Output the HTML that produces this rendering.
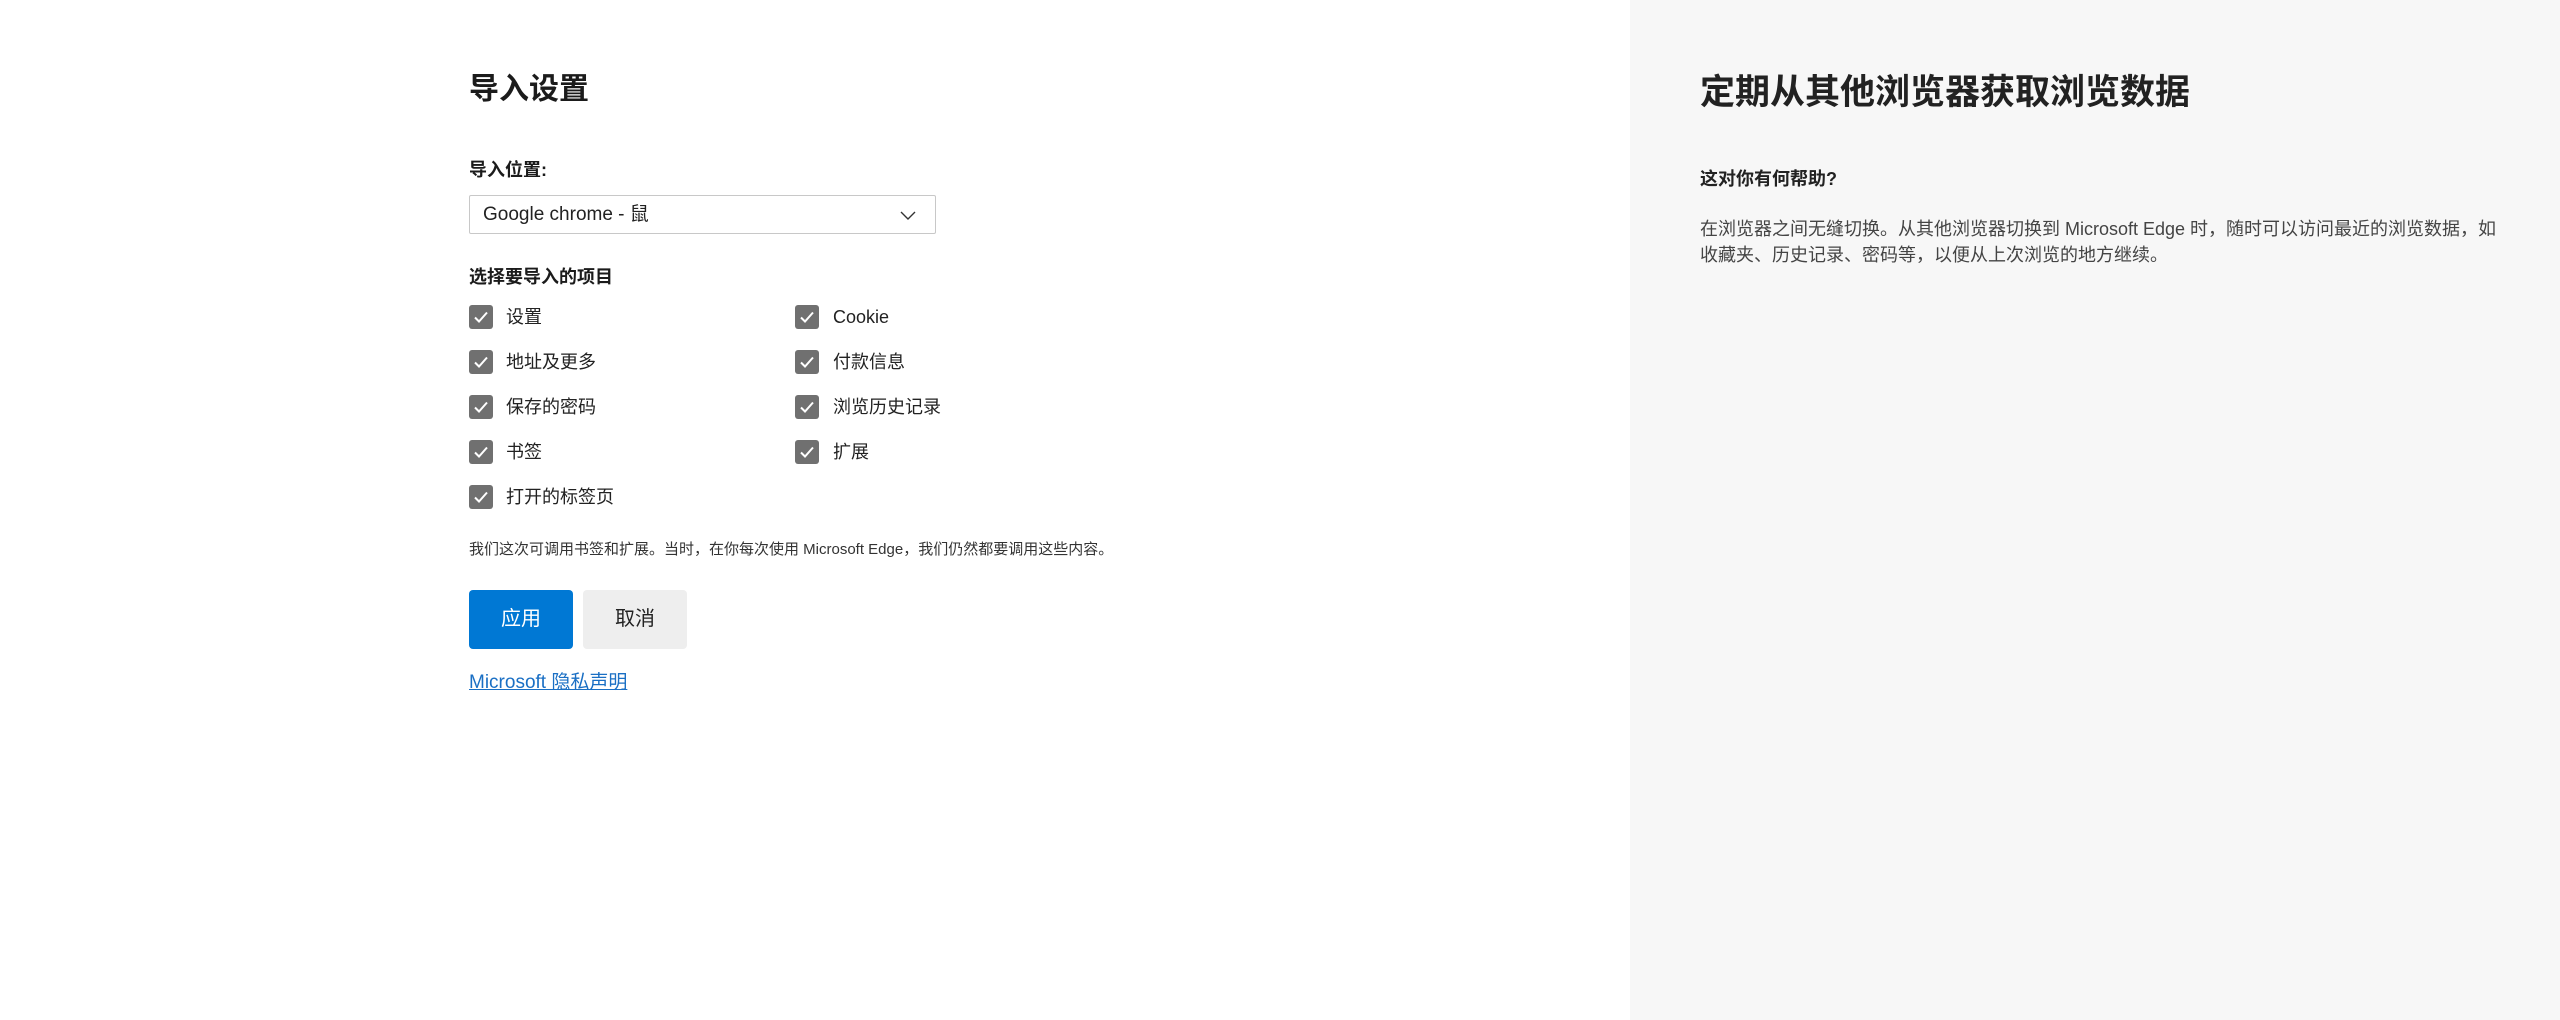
<!DOCTYPE html>
<html><head><meta charset="utf-8"><style>
html,body{margin:0;padding:0;width:2560px;height:1020px;overflow:hidden;background:#fff}
#bg{position:absolute;left:1630px;top:0;width:930px;height:1020px;background:#f7f7f7}
#c{position:absolute;left:0;top:0;width:2560px;height:1020px;font-family:"Liberation Sans","Noto Sans CJK SC",sans-serif;color:#1b1b1b}
.a{position:absolute;white-space:nowrap;line-height:1}
.cb{position:absolute;width:24px;height:24px;background:#707070;border-radius:3px}
.cb svg{position:absolute;left:4px;top:4px}
.t{position:absolute;font-size:18px;line-height:1;white-space:nowrap;color:#222}
</style></head><body>
<div id="bg"></div>
<div id="c">
<div class="a" style="left:469px;top:75px;font-size:30px;font-weight:bold">导入设置</div>
<div class="a" style="left:469px;top:161px;font-size:18px;font-weight:bold">导入位置:</div>
<div style="position:absolute;left:469px;top:195px;width:465px;height:37px;border:1px solid #c8c8c8;border-radius:2px;background:#fff">
<div class="a" style="left:13px;top:9px;font-size:19px;color:#222">Google chrome - 鼠</div>
<svg style="position:absolute;left:430px;top:13px" width="16" height="12" viewBox="0 0 16 12"><path d="M1 3 L8 10 L15 3" fill="none" stroke="#333" stroke-width="1.4"/></svg>
</div>
<div class="a" style="left:469px;top:268px;font-size:18px;font-weight:bold">选择要导入的项目</div>

<div class="cb" style="left:469px;top:305px"><svg width="16" height="16" viewBox="0 0 16 16"><path d="M2 8.5 L6 12.5 L14 3.5" fill="none" stroke="#fff" stroke-width="2"/></svg></div><div class="t" style="left:506px;top:308px">设置</div>
<div class="cb" style="left:469px;top:350px"><svg width="16" height="16" viewBox="0 0 16 16"><path d="M2 8.5 L6 12.5 L14 3.5" fill="none" stroke="#fff" stroke-width="2"/></svg></div><div class="t" style="left:506px;top:353px">地址及更多</div>
<div class="cb" style="left:469px;top:395px"><svg width="16" height="16" viewBox="0 0 16 16"><path d="M2 8.5 L6 12.5 L14 3.5" fill="none" stroke="#fff" stroke-width="2"/></svg></div><div class="t" style="left:506px;top:398px">保存的密码</div>
<div class="cb" style="left:469px;top:440px"><svg width="16" height="16" viewBox="0 0 16 16"><path d="M2 8.5 L6 12.5 L14 3.5" fill="none" stroke="#fff" stroke-width="2"/></svg></div><div class="t" style="left:506px;top:443px">书签</div>
<div class="cb" style="left:469px;top:485px"><svg width="16" height="16" viewBox="0 0 16 16"><path d="M2 8.5 L6 12.5 L14 3.5" fill="none" stroke="#fff" stroke-width="2"/></svg></div><div class="t" style="left:506px;top:488px">打开的标签页</div>

<div class="cb" style="left:795px;top:305px"><svg width="16" height="16" viewBox="0 0 16 16"><path d="M2 8.5 L6 12.5 L14 3.5" fill="none" stroke="#fff" stroke-width="2"/></svg></div><div class="t" style="left:833px;top:308px">Cookie</div>
<div class="cb" style="left:795px;top:350px"><svg width="16" height="16" viewBox="0 0 16 16"><path d="M2 8.5 L6 12.5 L14 3.5" fill="none" stroke="#fff" stroke-width="2"/></svg></div><div class="t" style="left:833px;top:353px">付款信息</div>
<div class="cb" style="left:795px;top:395px"><svg width="16" height="16" viewBox="0 0 16 16"><path d="M2 8.5 L6 12.5 L14 3.5" fill="none" stroke="#fff" stroke-width="2"/></svg></div><div class="t" style="left:833px;top:398px">浏览历史记录</div>
<div class="cb" style="left:795px;top:440px"><svg width="16" height="16" viewBox="0 0 16 16"><path d="M2 8.5 L6 12.5 L14 3.5" fill="none" stroke="#fff" stroke-width="2"/></svg></div><div class="t" style="left:833px;top:443px">扩展</div>

<div class="a" style="left:469px;top:542px;font-size:15px;color:#333">我们这次可调用书签和扩展。当时，在你每次使用 Microsoft Edge，我们仍然都要调用这些内容。</div>

<div style="position:absolute;left:469px;top:590px;width:104px;height:59px;background:#0078d4;border-radius:4px;color:#fff;font-size:20px;line-height:59px;text-align:center">应用</div>
<div style="position:absolute;left:583px;top:590px;width:104px;height:59px;background:#eeeeee;border-radius:4px;color:#222;font-size:20px;line-height:59px;text-align:center">取消</div>

<div class="a" style="left:469px;top:673px;font-size:19px;color:#1a6fc4;text-decoration:underline;line-height:20px">Microsoft 隐私声明</div>

<div class="a" style="left:1700px;top:75px;font-size:35px;font-weight:bold;color:#222">定期从其他浏览器获取浏览数据</div>
<div class="a" style="left:1700px;top:170px;font-size:18px;font-weight:bold;color:#222">这对你有何帮助?</div>
<div class="a" style="left:1700px;top:216px;font-size:18px;line-height:26px;color:#444">在浏览器之间无缝切换。从其他浏览器切换到 Microsoft Edge 时，随时可以访问最近的浏览数据，如<br>收藏夹、历史记录、密码等，以便从上次浏览的地方继续。</div>
</div>
</body></html>
